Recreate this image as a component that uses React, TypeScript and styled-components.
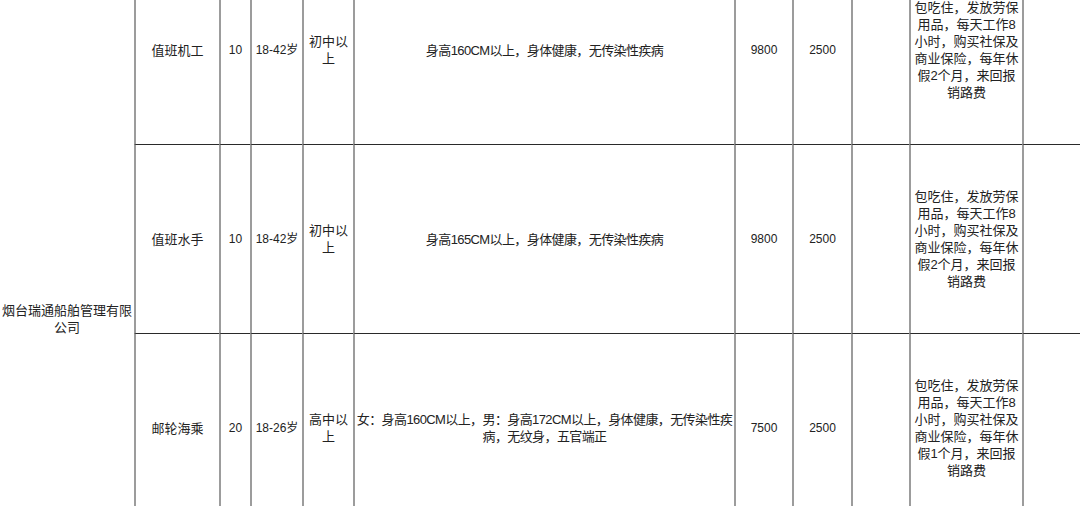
import React from "react";
import styled, { createGlobalStyle } from "styled-components";

const GlobalStyle = createGlobalStyle`
  html, body {
    margin: 0;
    padding: 0;
    background: #ffffff;
  }
  body {
    font-family: "Liberation Sans", "Noto Sans CJK SC", sans-serif;
    color: #222222;
  }
`;

const Page = styled.div`
  width: 1080px;
  height: 506px;
  overflow: hidden;
  background: #ffffff;
`;

const Sheet = styled.div`
  display: grid;
  grid-template-columns: 134px 85px 31px 52px 51px 381px 58px 59px 58px 113px 58px;
  grid-auto-rows: 189px;
  margin-top: -44px;
  font-size: 13px;
  line-height: 17px;
`;

const CompanyCell = styled.div`
  grid-row: 1 / span 3;
  padding-top: 346px;
  text-align: center;
  box-sizing: border-box;
`;

const Cell = styled.div<{ $small?: boolean; $last?: boolean; $tight?: boolean }>`
  display: flex;
  align-items: center;
  justify-content: center;
  text-align: center;
  box-sizing: border-box;
  border-left: ${(p) => (p.$last ? "none" : "2px solid #9c9c9c")};
  border-bottom: 1px solid #2a2a2a;
  font-size: ${(p) => (p.$small ? "12px" : "13px")};
  letter-spacing: ${(p) => (p.$tight ? "-0.6px" : "normal")};
  white-space: nowrap;
  overflow: hidden;
`;

const Lines = styled.div`
  display: flex;
  flex-direction: column;
  align-items: center;
`;

type Job = {
  title: string;
  count: string;
  age: string;
  edu: string[];
  req: string[];
  pay: string;
  fee: string;
  perks: string[];
};

const jobs: Job[] = [
  {
    title: "值班机工",
    count: "10",
    age: "18-42岁",
    edu: ["初中以", "上"],
    req: ["身高160CM以上，身体健康，无传染性疾病"],
    pay: "9800",
    fee: "2500",
    perks: ["包吃住，发放劳保", "用品，每天工作8", "小时，购买社保及", "商业保险，每年休", "假2个月，来回报", "销路费"],
  },
  {
    title: "值班水手",
    count: "10",
    age: "18-42岁",
    edu: ["初中以", "上"],
    req: ["身高165CM以上，身体健康，无传染性疾病"],
    pay: "9800",
    fee: "2500",
    perks: ["包吃住，发放劳保", "用品，每天工作8", "小时，购买社保及", "商业保险，每年休", "假2个月，来回报", "销路费"],
  },
  {
    title: "邮轮海乘",
    count: "20",
    age: "18-26岁",
    edu: ["高中以", "上"],
    req: ["女：身高160CM以上，男：身高172CM以上，身体健康，无传染性疾", "病，无纹身，五官端正"],
    pay: "7500",
    fee: "2500",
    perks: ["包吃住，发放劳保", "用品，每天工作8", "小时，购买社保及", "商业保险，每年休", "假1个月，来回报", "销路费"],
  },
];

const Multi = ({ lines }: { lines: string[] }) => (
  <Lines>
    {lines.map((l, i) => (
      <span key={i}>{l}</span>
    ))}
  </Lines>
);

export default function App() {
  return (
    <Page>
      <GlobalStyle />
      <Sheet>
        <CompanyCell>
          <Multi lines={["烟台瑞通船舶管理有限", "公司"]} />
        </CompanyCell>
        {jobs.map((job, i) => (
          <React.Fragment key={i}>
            <Cell>{job.title}</Cell>
            <Cell $small>{job.count}</Cell>
            <Cell $small>{job.age}</Cell>
            <Cell>
              <Multi lines={job.edu} />
            </Cell>
            <Cell $tight>
              <Multi lines={job.req} />
            </Cell>
            <Cell $small>{job.pay}</Cell>
            <Cell $small>{job.fee}</Cell>
            <Cell />
            <Cell>
              <Multi lines={job.perks} />
            </Cell>
            <Cell />
          </React.Fragment>
        ))}
      </Sheet>
    </Page>
  );
}
